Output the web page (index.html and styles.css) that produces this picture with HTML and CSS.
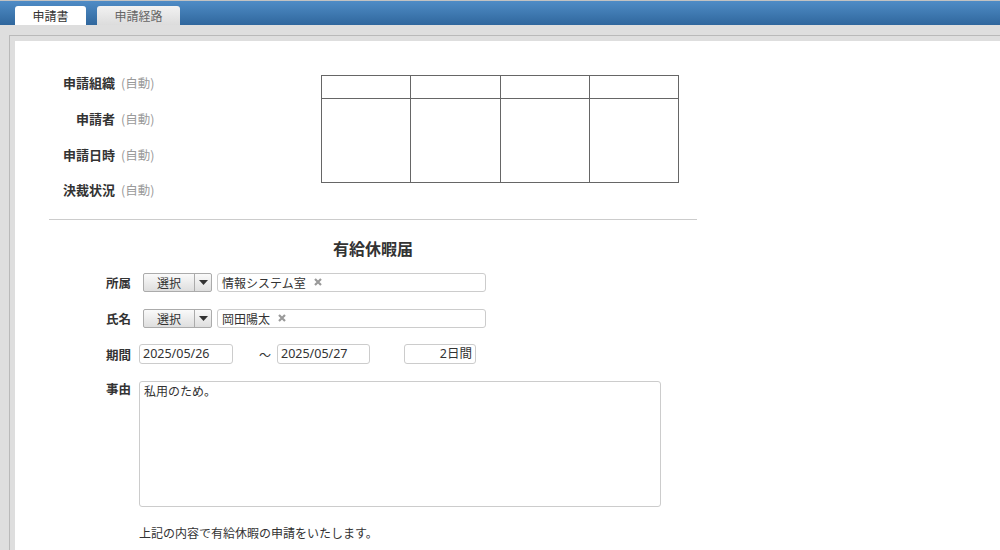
FILE: index.html
```html
<!DOCTYPE html>
<html lang="ja">
<head>
<meta charset="utf-8">
<title>有給休暇届</title>
<link rel="stylesheet" href="styles.css">
</head>
<body>
<div class="app">
  <div class="tabbar">
    <div class="tab active">申請書</div>
    <div class="tab">申請経路</div>
  </div>
  <div class="frame">
    <div class="sheet">
      <div class="head">
        <div class="meta">
          <div class="meta-row"><span class="meta-label">申請組織</span><span class="auto">(自動)</span></div>
          <div class="meta-row"><span class="meta-label">申請者</span><span class="auto">(自動)</span></div>
          <div class="meta-row"><span class="meta-label">申請日時</span><span class="auto">(自動)</span></div>
          <div class="meta-row"><span class="meta-label">決裁状況</span><span class="auto">(自動)</span></div>
        </div>
        <table class="stamps">
          <tr class="stamp-head"><td></td><td></td><td></td><td></td></tr>
          <tr class="stamp-body"><td></td><td></td><td></td><td></td></tr>
        </table>
      </div>
      <div class="divider"></div>
      <h1 class="title">有給休暇届</h1>
      <div class="form">
        <div class="row">
          <div class="label">所属</div>
          <div class="picker">
            <div class="pick-btn"><span class="pick-main">選択</span><span class="pick-arrow"><svg width="9" height="5" viewBox="0 0 9 5"><path d="M0 0h9L4.5 5z" fill="#333"/></svg></span></div>
            <div class="chip-box">情報システム室<svg class="del" width="8" height="8" viewBox="0 0 8 8"><path d="M1 1l6 6M7 1L1 7" stroke="#9a9a9a" stroke-width="2.2"/></svg></div>
          </div>
        </div>
        <div class="row">
          <div class="label">氏名</div>
          <div class="picker">
            <div class="pick-btn"><span class="pick-main">選択</span><span class="pick-arrow"><svg width="9" height="5" viewBox="0 0 9 5"><path d="M0 0h9L4.5 5z" fill="#333"/></svg></span></div>
            <div class="chip-box">岡田陽太<svg class="del" width="8" height="8" viewBox="0 0 8 8"><path d="M1 1l6 6M7 1L1 7" stroke="#9a9a9a" stroke-width="2.2"/></svg></div>
          </div>
        </div>
        <div class="row">
          <div class="label">期間</div>
          <div class="period">
            <div class="field date">2025/05/26</div>
            <span class="tilde">～</span>
            <div class="field date2">2025/05/27</div>
            <div class="field days">2日間</div>
          </div>
        </div>
        <div class="row reason">
          <div class="label">事由</div>
          <div class="textarea">私用のため。</div>
        </div>
        <p class="note">上記の内容で有給休暇の申請をいたします。</p>
      </div>
    </div>
  </div>
</div>
</body>
</html>
```

FILE: styles.css
```css
html, body {
  margin: 0;
  padding: 0;
  height: 100%;
  overflow: hidden;
}
body {
  background: #dedede;
  color: #333;
  font-family: "Noto Sans", "Noto Sans CJK JP", sans-serif;
  font-size: 12px;
}
.app {
  width: 1000px;
  height: 550px;
  overflow: hidden;
}
.tabbar {
  height: 24px;
  border-top: 1px solid #c2c2c2;
  background: linear-gradient(#4f8cc6, #30679d);
  display: flex;
  align-items: flex-end;
  gap: 11px;
  padding-left: 15px;
}
.tab {
  height: 19px;
  line-height: 19px;
  text-align: center;
  border-radius: 3px 3px 0 0;
  font-size: 12px;
  font-family: "Noto Sans CJK JP", sans-serif;
}
.tab.active {
  width: 71px;
  background: #fff;
  color: #333;
}
.tab:not(.active) {
  width: 83px;
  background: linear-gradient(#f2f2f2, #dcdcdc);
  color: #666;
}
.frame {
  margin: 10px 0 0 9px;
  border-top: 1px solid #b9b9b9;
  border-left: 1px solid #b9b9b9;
  padding: 5px 0 0 5px;
  height: 520px;
}
.sheet {
  background: #fff;
  height: 100%;
  padding: 23px 0 0 34px;
  box-sizing: border-box;
}
.head {
  display: flex;
}
.meta {
  width: 272px;
}
.meta-row {
  height: 36px;
  display: flex;
  align-items: center;
  gap: 6px;
}
.meta-row:last-child {
  height: 35px;
  align-items: flex-start;
  padding-top: 8px;
  box-sizing: border-box;
}
.meta-label {
  width: 66px;
  text-align: right;
  font-weight: bold;
  font-size: 13px;
  font-family: "Noto Sans CJK JP", sans-serif;
  color: #333;
}
.auto {
  color: #9a9a9a;
  font-size: 12.5px;
  font-family: "Noto Sans CJK JP", sans-serif;
}
.stamps {
  margin-top: 11px;
  border-collapse: collapse;
  table-layout: fixed;
  width: 358px;
  height: 108px;
}
.stamps td {
  border: 1px solid #666;
  padding: 0;
}
.stamp-head td {
  height: 22px;
}
.divider {
  width: 648px;
  margin-top: 12px;
  border-top: 1px solid #ccc;
}
.title {
  width: 648px;
  margin: 0;
  padding: 18px 0 6px;
  line-height: 20px;
  text-align: center;
  font-size: 16px;
  font-weight: bold;
  font-family: "Noto Sans CJK JP", sans-serif;
  color: #333;
}
.row {
  height: 36px;
  display: flex;
  align-items: center;
  gap: 8px;
}
.label {
  width: 82px;
  text-align: right;
  font-weight: bold;
  font-size: 12.5px;
  font-family: "Noto Sans CJK JP", sans-serif;
  color: #333;
}
.picker {
  display: flex;
  align-items: center;
  gap: 5px;
  margin-left: 4px;
}
.pick-btn {
  display: flex;
  height: 19px;
  box-sizing: border-box;
  border: 1px solid #ababab;
  border-radius: 2px;
  background: linear-gradient(#fafafa, #dedede);
}
.pick-main {
  width: 50px;
  text-align: center;
  line-height: 17px;
  border-right: 1px solid #ababab;
  font-family: "Noto Sans CJK JP", sans-serif;
}
.pick-arrow {
  width: 16px;
  display: flex;
  align-items: center;
  justify-content: center;
}
.chip-box {
  width: 269px;
  height: 19px;
  box-sizing: border-box;
  border: 1px solid #ccc;
  border-radius: 3px;
  padding-left: 4px;
  line-height: 17px;
  display: flex;
  align-items: center;
  gap: 8px;
  font-family: "Noto Sans CJK JP", sans-serif;
}
.period {
  display: flex;
  align-items: center;
}
.field {
  height: 20px;
  box-sizing: border-box;
  border: 1px solid #ccc;
  border-radius: 3px;
  line-height: 18px;
  padding: 0 3px;
  font-size: 12.5px;
}
.date {
  width: 94px;
}
.tilde {
  width: 14px;
  margin: 0 4px 0 26px;
  font-family: "Noto Sans CJK JP", sans-serif;
  color: #333;
}
.date2 {
  width: 93px;
}
.days {
  width: 72px;
  margin-left: 34px;
  text-align: right;
  font-family: "Noto Sans", "Noto Sans CJK JP", sans-serif;
}
.row.reason {
  height: auto;
  align-items: flex-start;
  margin-top: 9px;
}
.reason .label {
  line-height: 18px;
  margin-top: -1px;
}
.textarea {
  width: 522px;
  height: 126px;
  box-sizing: border-box;
  border: 1px solid #ccc;
  border-radius: 3px;
  padding: 1px 4px;
  line-height: 16px;
  font-family: "Noto Sans CJK JP", sans-serif;
}
.note {
  margin: 16px 0 0 90px;
  line-height: 20px;
  font-family: "Noto Sans CJK JP", sans-serif;
}
```
